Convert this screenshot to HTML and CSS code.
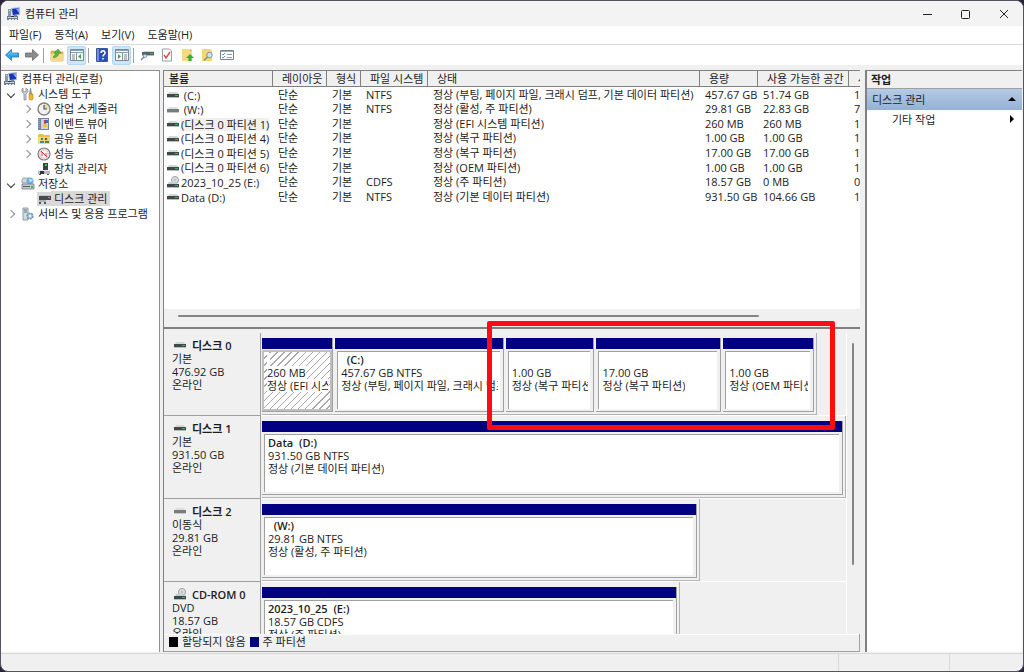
FILE: index.html
```html
<!DOCTYPE html>
<html lang="ko">
<head>
<meta charset="utf-8">
<title>컴퓨터 관리</title>
<link rel="stylesheet" href="styles.css">
</head>
<body>
<svg class="symbols" aria-hidden="true">
  <symbol id="computer" viewBox="0 0 14 14">
    <path d="M1 2h3v8H1z" fill="#8798a8"/><path d="M2 3h1v1H2z" fill="#d7e4ee"/>
    <path d="M4 1l9-1v8l-8 1z" fill="#aebccd"/><path d="M5 2l7-1v6l-6 1z" fill="#1733b8"/><path d="M9 2l3-1v5z" fill="#7fa5f0"/>
    <path d="M7 8h3v2H7z" fill="#7c8898"/><path d="M0 9h11v4H0z" fill="#6d7c8a"/><path d="M1 10h9v1H1z" fill="#c7d2da"/><path d="M4 9h3v1H4z" fill="#333d48"/><path d="M2 12h2v1H2zM5 12h2v1H5zM8 12h2v1H8z" fill="#dbe4ea"/>
  </symbol>
  <symbol id="tools" viewBox="0 0 14 14">
    <path d="M2 1v3l2 1 1-1V1l2 2v2L5 7v6H3V7L1 5V2z" fill="#c9ced3" stroke="#7b8289" stroke-width=".7"/>
    <path d="M9 1h1l1 6H8z" fill="#8c959d"/><path d="M8 7h4v5l-1 1H9l-1-1z" fill="#f2b632" stroke="#b97d14" stroke-width=".6"/>
  </symbol>
  <symbol id="clock" viewBox="0 0 14 14">
    <circle cx="7" cy="7" r="6" fill="#f4f1e9" stroke="#7d8389" stroke-width="1.4"/><path d="M7 7V2a5 5 0 0 1 5 5z" fill="#f0d79a"/><path d="M7 3v4h3" fill="none" stroke="#3a5785" stroke-width="1.2"/>
  </symbol>
  <symbol id="event" viewBox="0 0 14 14">
    <path d="M1 1h11v12H1z" fill="#6f83ab"/><path d="M4 2h7v10H4z" fill="#c9d4ea"/><path d="M2 2v10" stroke="#a9bce0" stroke-dasharray="1 1"/><path d="M7 3h2v4H7z" fill="#c93434"/><path d="M5 10l3-4 3 4z" fill="#f2c230"/><path d="M9 3h2v3H9z" fill="#416dc9"/>
  </symbol>
  <symbol id="shared" viewBox="0 0 14 14">
    <path d="M1 3l1-1h4l1 1h6v9H1z" fill="#e9bd4e"/><path d="M1 5h12v7H1z" fill="#f6d980"/><circle cx="5" cy="7" r="1.3" fill="#5d8f43"/><path d="M3 11V9h4v2z" fill="#3c86a6"/><circle cx="9" cy="7" r="1.3" fill="#7d5a32"/><path d="M8 11V9h4v2z" fill="#528640"/>
  </symbol>
  <symbol id="perf" viewBox="0 0 14 14">
    <circle cx="7" cy="7" r="6" fill="#fff" stroke="#777b80" stroke-width="1.2"/><circle cx="7" cy="7" r="4.2" fill="none" stroke="#dd8a84" stroke-width=".7"/><path d="M4 4l6 6M5 9V5l4 4V6" fill="none" stroke="#cf2d2d" stroke-width=".9"/>
  </symbol>
  <symbol id="device" viewBox="0 0 14 14">
    <path d="M6 1h5v7H6z" fill="#3c4347"/><path d="M8 2h2v2H8z" fill="#35c449"/><path d="M1 8h12v4H1z" fill="#b6bcc1"/><path d="M1 8h12v1H1z" fill="#e3e6e8"/><path d="M3 9h4v3H3z" fill="#30363a"/><path d="M2 12h2v1H2zM10 12h2v1h-2z" fill="#555"/>
  </symbol>
  <symbol id="storage" viewBox="0 0 14 14">
    <path d="M1 3l1-2h6v5H1z" fill="#d2d7da" stroke="#838a90" stroke-width=".7"/><circle cx="9" cy="4" r="3.5" fill="#64b5df"/><path d="M8 2l4 1-3 2z" fill="#d7f1ff"/><path d="M1 7h12v5H1z" fill="#c5cacd" stroke="#737a80" stroke-width=".8"/><path d="M2 9h7v1H2z" fill="#555c61"/><path d="M10 9h2v2h-2z" fill="#3bbc53"/>
  </symbol>
  <symbol id="diskmgmt" viewBox="0 0 14 14">
    <path d="M3 4h11l-1-1H4z" fill="#c3c7c9"/><path d="M2 4h12v4H2z" fill="#454a4d"/><path d="M11 5h2v1h-2z" fill="#3be04d"/><path d="M2 8h7v2H2z" fill="#aeb3b6"/><path d="M2 10h2v2H2zM7 10h2v2H7z" fill="#555"/>
  </symbol>
  <symbol id="services" viewBox="0 0 14 14">
    <path d="M2 1h5v12H2z" fill="#d1dae0" stroke="#7b8d99" stroke-width=".8"/><path d="M3 3h3M3 5h3" stroke="#65747e"/><circle cx="9" cy="9" r="3" fill="#a9c4da" stroke="#6088a9" stroke-width="1.2" stroke-dasharray="2 1"/><circle cx="9" cy="9" r="1" fill="#fff"/>
  </symbol>
  <symbol id="drive" viewBox="0 0 12 8">
    <path d="M1 3l1-2h8l1 2z" fill="#d4d7d8"/><path d="M0 3h12v3H0z" fill="#41484a"/><path d="M8 4h3v1H8z" fill="#35bb55"/><path d="M0 6h12v1H0z" fill="#b9bec0"/>
  </symbol>
  <symbol id="removable" viewBox="0 0 12 8">
    <path d="M1 3l1-2h8l1 2z" fill="#dcdede"/><path d="M0 3h12v3H0z" fill="#777c7e"/><path d="M0 6h12v1H0z" fill="#c5c9ca"/>
  </symbol>
  <symbol id="cd" viewBox="0 0 12 12">
    <circle cx="8" cy="4" r="3.5" fill="#e2e4e5" stroke="#999fa3"/><circle cx="8" cy="4" r="1" fill="#fff" stroke="#8d9296" stroke-width=".6"/><path d="M1 8l1-2h7l2 2z" fill="#c7cbcd"/><path d="M0 8h12v3H0z" fill="#41484a"/><path d="M8 9h3v1H8z" fill="#35bb55"/><path d="M0 11h12v1H0z" fill="#b9bec0"/>
  </symbol>
  <symbol id="back" viewBox="0 0 14 14"><path d="M.5 7l6-5.500v3.500h7v4h-7v3.500z" fill="#35a4e5" stroke="#2274b5" stroke-width=".8" stroke-linejoin="round"/><path d="M3 7l3-3v2h6" fill="none" stroke="#8bd6ff" stroke-width=".7"/></symbol>
  <symbol id="forward" viewBox="0 0 14 14"><path d="M13.500 7l-6-5.500v3.500h-7v4h7v3.500z" fill="#8d8d8d" stroke="#6a6a6a" stroke-width=".8" stroke-linejoin="round"/></symbol>
  <symbol id="up" viewBox="0 0 14 14"><path d="M1 3h5l1 1h6v9H1z" fill="#e8bd55" stroke="#bd9131" stroke-width=".6"/><path d="M1 6h12v7H1z" fill="#f5d889"/><path d="M3 9c1-1 2-2 3-4L4 5l4-4 3 4-2 0c0 2-2 4-5 5z" fill="#58b83a" stroke="#338322" stroke-width=".5"/></symbol>
  <symbol id="pane-left" viewBox="0 0 14 14"><path d="M.5 1.500h13v11H.5z" fill="#f7f7f7" stroke="#7e8b96"/><path d="M1 2h12v1H1zM1 4h12v1H1z" fill="#8e9dab"/><path d="M2 7h3M2 9h3M2 11h3" stroke="#7b8995"/><path d="M6 5h1v7H6z" fill="#8795a2"/><path d="M11 6v5L8 8.500z" fill="#49a43c"/></symbol>
  <symbol id="pane-right" viewBox="0 0 14 14"><path d="M.5 1.500h13v11H.5z" fill="#f7f7f7" stroke="#7e8b96"/><path d="M1 2h12v1H1zM1 4h12v1H1z" fill="#8e9dab"/><path d="M9 7h3M9 9h3M9 11h3" stroke="#7b8995"/><path d="M7 5h1v7H7z" fill="#8795a2"/><path d="M3 6v5l3-2.500z" fill="#49a43c"/></symbol>
  <symbol id="help" viewBox="0 0 14 14"><path d="M1.500.5h11v13h-11z" fill="#2c50b5" stroke="#1e357d" stroke-width=".7"/><path d="M2 1h2v12H2z" fill="#7690d8"/><path d="M6 5c0-3 4-3 4 0 0 1.500-2 1.500-2 3.500M8 10v1.500" fill="none" stroke="#fff" stroke-width="1.500"/></symbol>
  <symbol id="rescan" viewBox="0 0 14 14"><path d="M3 4l1-1h9l1 1z" fill="#cfd3d5"/><path d="M2 4h12v3H2z" fill="#596165"/><path d="M10 5h3v1h-3z" fill="#36b26a"/><path d="M2 7h12v1H2z" fill="#b6bcbf"/><circle cx="5" cy="8" r="1.800" fill="#c7e3f1" stroke="#75828b" stroke-width=".7"/><path d="M4 9l-3 3" stroke="#75828b" stroke-width="1.300"/></symbol>
  <symbol id="check" viewBox="0 0 14 14"><path d="M2.500 1h7l2 2v10h-9z" fill="#fff" stroke="#969da3"/><path d="M4 7l2 3 4-6" fill="none" stroke="#e14c3f" stroke-width="1.500"/></symbol>
  <symbol id="export" viewBox="0 0 14 14"><path d="M2 1h8l2 2v10H2z" fill="#f8d982"/><path d="M10 1l2 2h-2z" fill="#c9a443"/><path d="M10 6l4 4h-2.500v3h-3v-3H6z" fill="#2fb135"/></symbol>
  <symbol id="find" viewBox="0 0 14 14"><path d="M2 1h9l1 2v10H2z" fill="#f5d57c"/><circle cx="9.500" cy="7" r="2.700" fill="#c9e5f6" stroke="#7c94a7"/><path d="M7.500 9L4 12.500" stroke="#95907f" stroke-width="1.600"/></symbol>
  <symbol id="list" viewBox="0 0 14 14"><path d="M.5 2.500h13v9H.5z" fill="#fff" stroke="#77828c"/><path d="M1 3h12v1H1z" fill="#a3afb9"/><path d="M2 6l1 1 2-2M2 9l1 1 2-2" fill="none" stroke="#2c77bc" stroke-width=".8"/><path d="M7 6.500h5M7 9.500h5" stroke="#8e9aa4"/></symbol>
</svg>
<div class="window">
  <header class="titlebar">
    <svg class="icon"><use href="#computer"/></svg>
    <span class="title">컴퓨터 관리</span>
    <button class="caption" aria-label="최소화"><svg viewBox="0 0 10 10"><path d="M0 5.500h9"/></svg></button>
    <button class="caption" aria-label="최대화"><svg viewBox="0 0 10 10"><rect x=".5" y="1.500" width="8" height="8" rx="1"/></svg></button>
    <button class="caption" aria-label="닫기"><svg viewBox="0 0 10 10"><path d="M1 1l8 8M9 1L1 9"/></svg></button>
  </header>
  <nav class="menubar"><button>파일(F)</button><button>동작(A)</button><button>보기(V)</button><button>도움말(H)</button></nav>
  <div class="toolbar">
    <button aria-label="뒤로"><svg class="icon"><use href="#back"/></svg></button>
    <button aria-label="앞으로"><svg class="icon"><use href="#forward"/></svg></button>
    <span class="sep"></span>
    <button aria-label="위로"><svg class="icon"><use href="#up"/></svg></button>
    <button class="on" aria-label="콘솔 트리"><svg class="icon"><use href="#pane-left"/></svg></button>
    <span class="sep"></span>
    <button aria-label="도움말"><svg class="icon"><use href="#help"/></svg></button>
    <button class="on" aria-label="작업 창"><svg class="icon"><use href="#pane-right"/></svg></button>
    <span class="sep"></span>
    <button aria-label="다시 검사"><svg class="icon"><use href="#rescan"/></svg></button>
    <button aria-label="확인"><svg class="icon"><use href="#check"/></svg></button>
    <button aria-label="내보내기"><svg class="icon"><use href="#export"/></svg></button>
    <button aria-label="찾기"><svg class="icon"><use href="#find"/></svg></button>
    <button aria-label="목록"><svg class="icon"><use href="#list"/></svg></button>
  </div>
  <main class="main">
    <nav class="tree">
      <div class="node root"><svg class="icon"><use href="#computer"/></svg><span>컴퓨터 관리(로컬)</span></div>
      <div class="node"><button class="toggle open" aria-label="축소"></button><svg class="icon"><use href="#tools"/></svg><span>시스템 도구</span></div>
      <div class="node child"><button class="toggle" aria-label="확장"></button><svg class="icon"><use href="#clock"/></svg><span>작업 스케줄러</span></div>
      <div class="node child"><button class="toggle" aria-label="확장"></button><svg class="icon"><use href="#event"/></svg><span>이벤트 뷰어</span></div>
      <div class="node child"><button class="toggle" aria-label="확장"></button><svg class="icon"><use href="#shared"/></svg><span>공유 폴더</span></div>
      <div class="node child"><button class="toggle" aria-label="확장"></button><svg class="icon"><use href="#perf"/></svg><span>성능</span></div>
      <div class="node child leaf"><svg class="icon"><use href="#device"/></svg><span>장치 관리자</span></div>
      <div class="node"><button class="toggle open" aria-label="축소"></button><svg class="icon"><use href="#storage"/></svg><span>저장소</span></div>
      <div class="node child leaf selected"><svg class="icon"><use href="#diskmgmt"/></svg><span>디스크 관리</span></div>
      <div class="node"><button class="toggle" aria-label="확장"></button><svg class="icon"><use href="#services"/></svg><span>서비스 및 응용 프로그램</span></div>
    </nav>
    <section class="center">
      <div class="volumes">
        <table>
          <colgroup><col class="c-name"><col class="c-layout"><col class="c-type"><col class="c-fs"><col><col class="c-size"><col class="c-free"><col class="c-pct"></colgroup>
          <thead><tr><th class="sorted">볼륨</th><th>레이아웃</th><th>형식</th><th>파일 시스템</th><th>상태</th><th>용량</th><th>사용 가능한 공간</th><th class="cut">사용 가능한 비율</th></tr></thead>
          <tbody>
            <tr><td><svg class="drive"><use href="#drive"/></svg><span>&nbsp;(C:)</span></td><td>단순</td><td>기본</td><td>NTFS</td><td>정상 (부팅, 페이지 파일, 크래시 덤프, 기본 데이터 파티션)</td><td>457.67 GB</td><td>51.74 GB</td><td>11%</td></tr>
            <tr><td><svg class="drive"><use href="#removable"/></svg><span>&nbsp;(W:)</span></td><td>단순</td><td>기본</td><td>NTFS</td><td>정상 (활성, 주 파티션)</td><td>29.81 GB</td><td>22.83 GB</td><td>77%</td></tr>
            <tr><td><svg class="drive"><use href="#drive"/></svg><span class="focus">(디스크 0 파티션 1)</span></td><td>단순</td><td>기본</td><td></td><td>정상 (EFI 시스템 파티션)</td><td>260 MB</td><td>260 MB</td><td>100%</td></tr>
            <tr><td><svg class="drive"><use href="#drive"/></svg><span>(디스크 0 파티션 4)</span></td><td>단순</td><td>기본</td><td></td><td>정상 (복구 파티션)</td><td>1.00 GB</td><td>1.00 GB</td><td>100%</td></tr>
            <tr><td><svg class="drive"><use href="#drive"/></svg><span>(디스크 0 파티션 5)</span></td><td>단순</td><td>기본</td><td></td><td>정상 (복구 파티션)</td><td>17.00 GB</td><td>17.00 GB</td><td>100%</td></tr>
            <tr><td><svg class="drive"><use href="#drive"/></svg><span>(디스크 0 파티션 6)</span></td><td>단순</td><td>기본</td><td></td><td>정상 (OEM 파티션)</td><td>1.00 GB</td><td>1.00 GB</td><td>100%</td></tr>
            <tr><td><svg class="drive disc"><use href="#cd"/></svg><span>2023_10_25 (E:)</span></td><td>단순</td><td>기본</td><td>CDFS</td><td>정상 (주 파티션)</td><td>18.57 GB</td><td>0 MB</td><td>0%</td></tr>
            <tr><td><svg class="drive"><use href="#drive"/></svg><span>Data (D:)</span></td><td>단순</td><td>기본</td><td>NTFS</td><td>정상 (기본 데이터 파티션)</td><td>931.50 GB</td><td>104.66 GB</td><td>11%</td></tr>
          </tbody>
        </table>
        <div class="hscroll"><div class="hthumb"></div></div>
      </div>
      <div class="graphical">
        <div class="disks">
          <article class="disk">
            <div class="info"><h2><svg class="drive"><use href="#drive"/></svg>디스크 0</h2><p>기본</p><p>476.92 GB</p><p>온라인</p></div>
            <div class="lane"><div class="graph" style="width:95%">
              <div class="vol hatched" style="flex-grow:72"><div class="box"><p>&nbsp;</p><p>260 MB</p><p>정상 (EFI 시스템 파티션)</p></div></div>
              <div class="vol" style="flex-grow:172"><div class="box"><h3>&nbsp; (C:)</h3><p>457.67 GB NTFS</p><p>정상 (부팅, 페이지 파일, 크래시 덤프, 기본 데이터 파티션)</p></div></div>
              <div class="vol" style="flex-grow:90"><div class="box"><p>&nbsp;</p><p>1.00 GB</p><p>정상 (복구 파티션)</p></div></div>
              <div class="vol" style="flex-grow:127"><div class="box"><p>&nbsp;</p><p>17.00 GB</p><p>정상 (복구 파티션)</p></div></div>
              <div class="vol" style="flex-grow:92"><div class="box"><p>&nbsp;</p><p>1.00 GB</p><p>정상 (OEM 파티션)</p></div></div>
            </div></div>
          </article>
          <article class="disk">
            <div class="info"><h2><svg class="drive"><use href="#drive"/></svg>디스크 1</h2><p>기본</p><p>931.50 GB</p><p>온라인</p></div>
            <div class="lane"><div class="graph" style="width:100%"><div class="vol" style="flex-grow:1"><div class="box"><h3>Data &nbsp;(D:)</h3><p>931.50 GB NTFS</p><p>정상 (기본 데이터 파티션)</p></div></div></div></div>
          </article>
          <article class="disk">
            <div class="info"><h2><svg class="drive"><use href="#removable"/></svg>디스크 2</h2><p>이동식</p><p>29.81 GB</p><p>온라인</p></div>
            <div class="lane"><div class="graph" style="width:75%"><div class="vol" style="flex-grow:1"><div class="box"><h3>&nbsp; (W:)</h3><p>29.81 GB NTFS</p><p>정상 (활성, 주 파티션)</p></div></div></div></div>
          </article>
          <article class="disk">
            <div class="info"><h2><svg class="drive disc"><use href="#cd"/></svg>CD-ROM 0</h2><p>DVD</p><p>18.57 GB</p><p>온라인</p></div>
            <div class="lane"><div class="graph" style="width:71.600%"><div class="vol" style="flex-grow:1"><div class="box"><h3>2023_10_25 &nbsp;(E:)</h3><p>18.57 GB CDFS</p><p>정상 (주 파티션)</p></div></div></div></div>
          </article>
        </div>
        <div class="vscroll"><div class="vthumb"></div></div>
      </div>
      <div class="legend"><i class="swatch black"></i><span>할당되지 않음</span><i class="swatch navy"></i><span>주 파티션</span></div>
      <div class="callout"></div>
    </section>
    <aside class="actions">
      <h2>작업</h2>
      <button class="group"><span>디스크 관리</span><svg viewBox="0 0 8 8"><path d="M0 6l4-4 4 4z"/></svg></button>
      <button class="more"><span>기타 작업</span><svg viewBox="0 0 8 8"><path d="M2 0l4 4-4 4z"/></svg></button>
    </aside>
  </main>
  <footer class="status"><span></span><span></span><span></span></footer>
</div>
</body>
</html>
```
FILE: styles.css
```css
* { box-sizing: border-box; }

body {
  margin: 0;
  height: 100vh;
  overflow: hidden;
  background: #2a2340;
  color: #1c1c1c;
  font: 11px/13px "Open Sans", "Noto Sans CJK KR", sans-serif;
}

h1, h2, h3, p { margin: 0; font-size: 11px; }
button { margin: 0; padding: 0; border: 0; background: none; color: inherit; font: inherit; }
.symbols { position: absolute; width: 0; height: 0; }
.icon { flex: none; width: 14px; height: 14px; }
.drive { flex: none; width: 12px; height: 8px; }
.drive.disc { height: 12px; }

.window {
  display: flex;
  flex-direction: column;
  height: 100%;
  border: 1px solid #55525c;
  border-radius: 8px;
  overflow: hidden;
  background: #f0f0f0;
}

.titlebar { display: flex; align-items: center; flex: none; height: 25px; padding-left: 6px; background: #f3f3f3; }
.title { flex: 1; padding-left: 4px; }
.caption { display: flex; align-items: center; justify-content: center; width: 38px; height: 25px; }
.caption svg { width: 10px; height: 10px; fill: none; stroke: #222; }

.menubar { display: flex; gap: 13px; flex: none; height: 19px; padding: 0 0 2px 8px; background: #fff; border-bottom: 1px solid #d5d9db; }

.toolbar { display: flex; align-items: center; gap: 1px; flex: none; height: 20px; padding-left: 1px; background: #fff; }
.toolbar button { display: flex; align-items: center; justify-content: center; width: 19px; height: 19px; }
.toolbar .on { background: #cce6f9; border: 1px solid #b3d9f5; border-radius: 2px; }
.sep { width: 1px; height: 15px; margin: 0 2px 0 1px; background: #a0a0a0; }

.main { display: flex; flex: 1; min-height: 0; padding: 5px 1px 0 0; }

.tree { flex: none; width: 159px; background: #fff; border: solid #909090; border-width: 1px 1px 0 0; overflow: hidden; }
.node { display: flex; align-items: center; height: 15px; padding-left: 3px; white-space: nowrap; }
.node span { padding: 0 3px; line-height: 15px; }
.root span { padding-left: 4px; }
.child { padding-left: 19px; }
.leaf { padding-left: 36px; }
.selected .icon, .selected span { background: #d9d9d9; }
.toggle { width: 17px; height: 15px; display: flex; align-items: center; padding-left: 4px; }
.toggle::before { content: ""; width: 5px; height: 5px; border: solid #8a8a8a; border-width: 1px 1px 0 0; transform: rotate(45deg); }
.toggle.open::before { border-color: #333; transform: rotate(135deg); }

.center { position: relative; display: flex; flex-direction: column; flex: 1; min-width: 0; margin-left: 3px; border-left: 1px solid #808080; }

.volumes { display: flex; flex-direction: column; flex: 259 0 0; min-height: 0; background: #fff; border: solid #808080; border-width: 1px 0 2px; }
.volumes table { width: 100%; border-collapse: separate; border-spacing: 0; table-layout: fixed; }
.c-name { width: 109px; }
.c-layout { width: 54px; }
.c-type { width: 34px; }
.c-fs { width: 67px; }
.c-size { width: 58px; }
.c-free { width: 91px; }
.c-pct { width: 11px; }
th, td { padding: 0; overflow: hidden; white-space: nowrap; text-align: left; line-height: 13px; }
th { height: 16px; padding-left: 9px; font-weight: 400; background: #f0f0f0; border: solid #808080; border-width: 0 1px 1px 0; }
th:last-child { border-right: 0; }
th.sorted { padding-left: 5px; font-weight: 500; }
td { height: 14px; padding-left: 5px; }
td:first-child { padding-left: 3px; }
td .drive { display: inline-block; margin-right: 2px; vertical-align: middle; }
td span { display: inline-block; vertical-align: middle; }
.focus { background: #f0f0f0; }
.hscroll { display: flex; align-items: center; height: 18px; margin-top: auto; padding: 0 101px 4px 14px; background: #f0f0f0; }
.hthumb { flex: 1; height: 2px; border-radius: 1px; background: #858585; }

.graphical { display: flex; flex: 305 0 0; min-height: 0; padding-top: 4px; }
.disks { flex: 1; min-width: 0; overflow: hidden; border-right: 1px solid #fff; }
.disk { display: flex; height: 83px; }
.info { flex: none; width: 97px; padding: 6px 0 0 8px; border: solid #a0a0a0; border-width: 0 1px 1px 0; }
.info h2 { display: flex; align-items: center; height: 13px; font-weight: 600; }
.info h2 .drive { margin: 0 6px 0 2px; }
.info .disc { margin-top: -4px; }
.lane { flex: 1; min-width: 0; padding-left: 1px; border-bottom: 1px solid #fff; }
.graph { display: flex; gap: 2px; height: 82px; padding: 5px 2px 2px 0; border: solid #b4b4b4; border-width: 0 1px 1px 0; }
.vol { display: flex; flex-direction: column; flex: 1 1 0; min-width: 0; border: solid #a0a0a0; border-width: 0 1px 1px 0; }
.vol::before { content: ""; height: 11px; background: #000080; }
.box { flex: 1; margin: 2px 3px 2px 2px; padding: 1px 2px 0 3px; background: #fff; border: solid #a0a0a0; border-width: 1px 0 0 1px; overflow: hidden; white-space: nowrap; }
.box p { width: fit-content; max-width: 100%; overflow: hidden; }
.box h3 { font-weight: 600; }
.hatched .box { margin: 1px 0 0; padding: 1px 2px 0 3px; border: 2px solid #c0c0c0; background: repeating-linear-gradient(135deg, #fff 0 4px, #a8a8a8 4px 5px); }
.hatched p { background: #fff; }

.vscroll { flex: none; width: 13px; padding: 10px 6px 69px 5px; }
.vthumb { width: 2px; height: 100%; border-radius: 1px; background: #858585; }

.legend { display: flex; align-items: center; gap: 4px; flex: none; height: 18px; padding: 0 0 2px 5px; border: solid #a0a0a0; border-width: 0 1px 1px 0; box-shadow: inset 0 1px #fff; }
.swatch { width: 9px; height: 10px; }
.black { background: #000; }
.navy { background: #000080; }

.callout { position: absolute; top: 251px; left: 323px; right: 25px; height: 109px; border: 5px solid #fd0d12; border-radius: 2px; }

.actions { flex: none; width: 157px; margin-left: 5px; background: #fff; border: solid #808080; border-width: 1px 0 0 2px; }
.actions h2 { height: 18px; padding: 2px 4px; font-weight: 600; background: #f0f0f0; border-bottom: 1px solid #a0a0a0; }
.actions button { display: flex; align-items: center; justify-content: space-between; width: 100%; height: 18px; padding: 0 6px 0 5px; }
.actions svg { width: 8px; height: 8px; }
.actions .group { height: 21px; padding-bottom: 1px; background: linear-gradient(#b5cbe5, #94b1d4); }
.actions .more { padding-left: 25px; }

.status { display: grid; grid-template-columns: 1fr 111px 73px; flex: none; height: 18px; margin-top: 1px; border-top: 1px solid #d8d8d8; }
.status span { border-right: 1px solid #d8d8d8; }
.status span:last-child { border: 0; }
```
